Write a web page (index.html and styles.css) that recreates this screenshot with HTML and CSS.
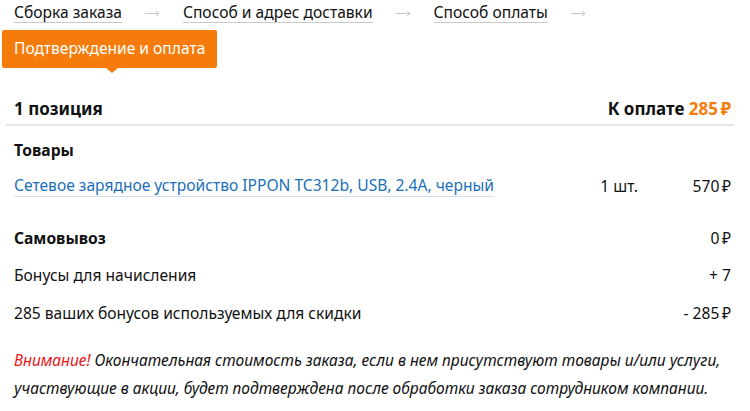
FILE: index.html
```html
<!DOCTYPE html>
<html lang="ru">
<head>
<meta charset="utf-8">
<link rel="stylesheet" href="styles.css">
</head>
<body>
<div class="page">
  <nav class="steps">
    <span class="step">Сборка заказа</span>
    <svg class="arrow" width="15" height="7" viewBox="0 0 15 7"><path d="M0 3.5H14M11 1L14 3.5L11 6" fill="none" stroke="#c4c4c4" stroke-width="1"/></svg>
    <span class="step">Способ и адрес доставки</span>
    <svg class="arrow" width="15" height="7" viewBox="0 0 15 7"><path d="M0 3.5H14M11 1L14 3.5L11 6" fill="none" stroke="#c4c4c4" stroke-width="1"/></svg>
    <span class="step">Способ оплаты</span>
    <svg class="arrow" width="15" height="7" viewBox="0 0 15 7"><path d="M0 3.5H14M11 1L14 3.5L11 6" fill="none" stroke="#c4c4c4" stroke-width="1"/></svg>
  </nav>
  <div class="tab-row"><div class="current">Подтверждение и оплата</div></div>

  <div class="summary">
    <div class="count">1 позиция</div>
    <div class="total">К оплате <span class="sum">285&thinsp;₽</span></div>
  </div>

  <div class="section-title">Товары</div>
  <div class="item">
    <a class="item-name" href="#">Сетевое зарядное устройство IPPON TC312b, USB, 2.4A, черный</a>
    <span class="qty">1 шт.</span>
    <span class="price">570&thinsp;₽</span>
  </div>

  <div class="line bold"><span>Самовывоз</span><span class="val">0&thinsp;₽</span></div>
  <div class="line l2"><span>Бонусы для начисления</span><span>+ 7</span></div>
  <div class="line l3"><span>285 ваших бонусов используемых для скидки</span><span>- 285&thinsp;₽</span></div>

  <p class="notice"><span class="warn">Внимание!</span> Окончательная стоимость заказа, если в нем присутствуют товары и/или услуги, участвующие в акции, будет подтверждена после обработки заказа сотрудником компании.</p>
</div>
</body>
</html>
```
FILE: styles.css
```css
html, body {
  margin: 0;
  padding: 0;
  background: #fff;
  overflow: hidden;
  height: 411px;
}
body {
  font-family: "Noto Sans", "Open Sans", sans-serif;
  font-size: 15.6px;
  color: #111;
}
.page {
  box-sizing: border-box;
  height: 411px;
  overflow: hidden;
  padding: 0 19px 0 14px;
}
.steps {
  display: flex;
  align-items: center;
  gap: 23px;
  height: 24px;
}
.step {
  line-height: 20px;
  border-bottom: 1px solid #c9c9c9;
  margin-top: 1px;
}
.arrow {
  display: block;
  flex: none;
  margin-top: 2px;
}
.tab-row {
  display: flex;
  margin: 6px 0 0 -12px;
}
.current {
  position: relative;
  padding: 0 12px;
  height: 38px;
  line-height: 37px;
  background: #f57c0a;
  color: #fff;
  border-radius: 2px;
}
.current::after {
  content: "";
  position: absolute;
  left: 104px;
  bottom: -5px;
  border-left: 6px solid transparent;
  border-right: 6px solid transparent;
  border-top: 5px solid #f57c0a;
}
.summary {
  display: flex;
  justify-content: space-between;
  align-items: center;
  margin: 24px -3px 0 -8px;
  padding: 0 3px 0 8px;
  height: 32px;
  border-bottom: 2px solid #e6e6e6;
  font-weight: bold;
  font-size: 17px;
}
.sum {
  color: #f57c0a;
}
.section-title {
  font-weight: bold;
  margin-top: 13px;
  line-height: 22px;
}
.item {
  display: grid;
  grid-template-columns: 1fr auto 93px;
  align-items: center;
  margin-top: 13px;
  height: 24px;
}
.item-name {
  color: #1c6fb7;
  text-decoration: none;
  border-bottom: 1px solid #cfe1f1;
  justify-self: start;
  line-height: 21px;
}
.price {
  text-align: right;
}
.line {
  display: flex;
  justify-content: space-between;
  line-height: 22px;
}
.line.bold {
  font-weight: bold;
  margin-top: 29px;
}
.line.bold .val {
  font-weight: normal;
}
.line.l2 {
  margin-top: 15px;
}
.line.l3 {
  margin-top: 16px;
}
.notice {
  font-style: italic;
  font-size: 15.5px;
  line-height: 28px;
  margin: 22px 0 0;
}
.warn {
  color: #e8161b;
}
```
